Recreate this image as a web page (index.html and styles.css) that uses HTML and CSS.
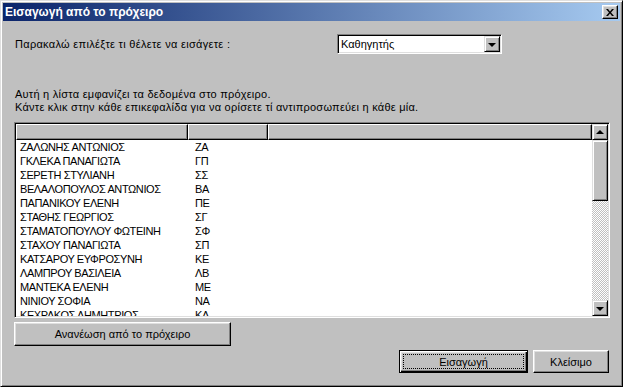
FILE: index.html
```html
<!DOCTYPE html>
<html lang="el">
<head>
    <meta charset="UTF-8">
    <title>Εισαγωγή από το πρόχειρο</title>
    <link rel="stylesheet" href="styles.css">
</head>
<body>
    <div class="window">
        <div class="titlebar">
            <span class="title">Εισαγωγή από το πρόχειρο</span>
            <button class="close-btn">
                <svg width="8" height="7" viewBox="0 0 8 7">
                    <path d="M0 0h2l2 2.5L6 0h2L5 3.5 8 7H6L4 4.5 2 7H0l3-3.5z" fill="#000"/>
                </svg>
            </button>
        </div>

        <div class="dialog">
            <div class="prompt-row">
                <span class="label">Παρακαλώ επιλέξτε τι θέλετε να εισάγετε :</span>
                <div class="combo">
                    <span class="combo-text">Καθηγητής</span>
                    <span class="combo-btn"><i class="arrow-down"></i></span>
                </div>
            </div>

            <p class="info">
                Αυτή η λίστα εμφανίζει τα δεδομένα στο πρόχειρο.<br>
                Κάντε κλικ στην κάθε επικεφαλίδα για να ορίσετε τί αντιπροσωπεύει η κάθε μία.
            </p>

            <div class="listview">
                <div class="list-main">
                    <div class="list-header">
                        <span class="hcell col-name"></span>
                        <span class="hcell col-code"></span>
                        <span class="hcell col-rest"></span>
                    </div>
                    <div class="list-rows" id="rows"></div>
                </div>
                <div class="scrollbar">
                    <span class="sb-btn"><i class="arrow-up"></i></span>
                    <span class="sb-thumb"></span>
                    <span class="sb-track"></span>
                    <span class="sb-btn"><i class="arrow-down"></i></span>
                </div>
            </div>

            <button class="btn refresh-btn">Ανανέωση από το πρόχειρο</button>

            <div class="actions">
                <button class="btn default-btn"><span class="focus">Εισαγωγή</span></button>
                <button class="btn close-action">Κλείσιμο</button>
            </div>
        </div>
    </div>

    <script>
        const rows = [
            ['ΖΑΛΩΝΗΣ ΑΝΤΩΝΙΟΣ', 'ΖΑ'],
            ['ΓΚΛΕΚΑ ΠΑΝΑΓΙΩΤΑ', 'ΓΠ'],
            ['ΣΕΡΕΤΗ ΣΤΥΛΙΑΝΗ', 'ΣΣ'],
            ['ΒΕΛΑΛΟΠΟΥΛΟΣ ΑΝΤΩΝΙΟΣ', 'ΒΑ'],
            ['ΠΑΠΑΝΙΚΟΥ ΕΛΕΝΗ', 'ΠΕ'],
            ['ΣΤΑΘΗΣ ΓΕΩΡΓΙΟΣ', 'ΣΓ'],
            ['ΣΤΑΜΑΤΟΠΟΥΛΟΥ ΦΩΤΕΙΝΗ', 'ΣΦ'],
            ['ΣΤΑΧΟΥ ΠΑΝΑΓΙΩΤΑ', 'ΣΠ'],
            ['ΚΑΤΣΑΡΟΥ ΕΥΦΡΟΣΥΝΗ', 'ΚΕ'],
            ['ΛΑΜΠΡΟΥ ΒΑΣΙΛΕΙΑ', 'ΛΒ'],
            ['ΜΑΝΤΕΚΑ ΕΛΕΝΗ', 'ΜΕ'],
            ['ΝΙΝΙΟΥ ΣΟΦΙΑ', 'ΝΑ'],
            ['ΚΕΧΡΑΚΟΣ ΔΗΜΗΤΡΙΟΣ', 'ΚΔ'],
        ];

        const list = document.getElementById('rows');
        rows.forEach(r => {
            const row = document.createElement('div');
            row.className = 'row';
            row.innerHTML = `<span class="col-name">${r[0]}</span><span class="col-code">${r[1]}</span>`;
            list.appendChild(row);
        });
    </script>
</body>
</html>
```

FILE: styles.css
```css
body {
    margin: 0;
    background: #c0c0c0;
    font-family: 'Liberation Sans', Arial, sans-serif;
    font-size: 11px;
    color: #000;
}

/* classic window frame */
.window {
    width: 623px;
    height: 387px;
    box-sizing: border-box;
    background: #c0c0c0;
    border: 1px solid;
    border-color: #dfdfdf #000 #000 #dfdfdf;
    box-shadow: inset 1px 1px #fff, inset -1px -1px #808080;
    padding: 2px;
    display: flex;
    flex-direction: column;
}

.titlebar {
    height: 18px;
    flex-shrink: 0;
    background: linear-gradient(to right, #0a246a, #a6caf0);
    display: flex;
    align-items: center;
    justify-content: space-between;
    padding: 0 2px 0 2px;
}

.title {
    color: #fff;
    font-weight: bold;
    font-size: 12px;
}

.close-btn {
    width: 16px;
    height: 14px;
    padding: 0;
    background: #c0c0c0;
    border: 1px solid;
    border-color: #fff #000 #000 #fff;
    box-shadow: inset -1px -1px #808080, inset 1px 1px #dfdfdf;
    display: flex;
    align-items: center;
    justify-content: center;
}

.dialog {
    flex: 1;
    display: flex;
    flex-direction: column;
    align-items: flex-start;
    padding: 0 11px;
}

.prompt-row {
    margin-top: 13px;
    display: grid;
    grid-template-columns: 323px 165px;
    align-items: center;
}

.label {
    padding-left: 1px;
    letter-spacing: 0.3px;
}

/* sunken combobox */
.combo {
    height: 20px;
    box-sizing: border-box;
    background: #fff;
    border: 1px solid;
    border-color: #808080 #fff #fff #808080;
    box-shadow: inset 1px 1px #000, inset -1px -1px #dfdfdf;
    display: flex;
    align-items: center;
    justify-content: space-between;
    padding: 1px;
}

.combo-text {
    padding-left: 2px;
}

.combo-btn,
.sb-btn {
    width: 16px;
    height: 16px;
    box-sizing: border-box;
    background: #c0c0c0;
    border: 1px solid;
    border-color: #dfdfdf #000 #000 #dfdfdf;
    box-shadow: inset 1px 1px #fff, inset -1px -1px #808080;
    display: flex;
    align-items: center;
    justify-content: center;
}

.arrow-down {
    width: 0;
    height: 0;
    border-left: 4px solid transparent;
    border-right: 4px solid transparent;
    border-top: 4px solid #000;
    margin-top: 1px;
}

.arrow-up {
    width: 0;
    height: 0;
    border-left: 4px solid transparent;
    border-right: 4px solid transparent;
    border-bottom: 4px solid #000;
    margin-top: -1px;
}

.info {
    margin: 34px 0 0;
    padding-left: 1px;
    line-height: 13px;
    letter-spacing: 0.25px;
}

/* list view */
.listview {
    margin-top: 8px;
    width: 596px;
    height: 196px;
    box-sizing: border-box;
    background: #fff;
    border: 1px solid;
    border-color: #808080 #fff #fff #808080;
    box-shadow: inset 1px 1px #000, inset -1px -1px #dfdfdf;
    padding: 1px;
    display: flex;
    overflow: hidden;
}

.list-main {
    flex: 1;
    display: flex;
    flex-direction: column;
    overflow: hidden;
}

.list-header {
    display: flex;
    height: 16px;
    flex-shrink: 0;
}

.hcell {
    box-sizing: border-box;
    height: 16px;
    background: #c0c0c0;
    border: 1px solid;
    border-color: #fff #000 #000 #fff;
    box-shadow: inset -1px -1px #808080;
}

.hcell.col-name { width: 172px; }
.hcell.col-code { width: 80px; }
.hcell.col-rest { flex: 1; }

.list-rows {
    overflow: hidden;
}

.row {
    display: flex;
    height: 14px;
    line-height: 14px;
    white-space: nowrap;
    letter-spacing: -0.4px;
}

.row .col-name {
    width: 172px;
    padding-left: 4px;
    box-sizing: border-box;
}

.row .col-code {
    padding-left: 7px;
}

.scrollbar {
    width: 16px;
    display: flex;
    flex-direction: column;
}

.sb-thumb {
    height: 61px;
    box-sizing: border-box;
    background: #c0c0c0;
    border: 1px solid;
    border-color: #dfdfdf #000 #000 #dfdfdf;
    box-shadow: inset 1px 1px #fff, inset -1px -1px #808080;
}

.sb-track {
    flex: 1;
    background: repeating-conic-gradient(#fff 0 25%, #c0c0c0 0 50%) 0 0 / 2px 2px;
}

/* buttons */
.btn {
    font-family: 'Liberation Sans', Arial, sans-serif;
    font-size: 11px;
    color: #000;
    background: #c0c0c0;
    box-sizing: border-box;
    border: 1px solid;
    border-color: #fff #000 #000 #fff;
    box-shadow: inset -1px -1px #808080, inset 1px 1px #dfdfdf;
    padding: 0;
}

.refresh-btn {
    margin-top: 4px;
    width: 217px;
    height: 24px;
}

.actions {
    align-self: stretch;
    margin-top: 4px;
    display: flex;
    justify-content: flex-end;
    gap: 5px;
}

.default-btn {
    width: 129px;
    height: 23px;
    border-color: #000;
    box-shadow: inset 1px 1px #fff, inset -1px -1px #000, inset -2px -2px #808080, inset 2px 2px #dfdfdf;
    display: flex;
    padding: 3px;
}

.default-btn .focus {
    flex: 1;
    border: 1px dotted #000;
    display: flex;
    align-items: center;
    justify-content: center;
}

.close-action {
    width: 76px;
    height: 23px;
}
```
